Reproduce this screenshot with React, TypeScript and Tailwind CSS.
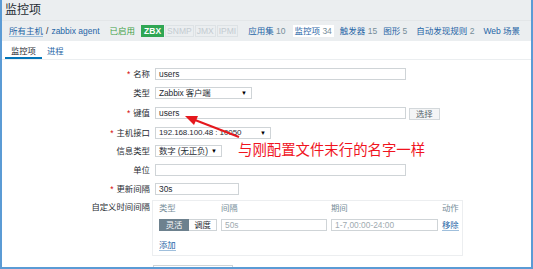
import { FC, ReactNode } from "react";

const font = { fontFamily: '"Liberation Sans", "Noto Sans CJK SC", sans-serif' };

const Req: FC = () => <span className="text-[#d40000] mr-[3px]">*</span>;

const Row: FC<{ label: ReactNode; children: ReactNode; top?: boolean }> = ({ label, children, top }) => (
  <div className={"flex " + (top ? "items-start" : "items-center")}>
    <div className={"w-[148px] shrink-0 text-right pr-0 " + (top ? "pt-[1px]" : "")}>{label}</div>
    <div className="ml-[5px] flex items-center">{children}</div>
  </div>
);

const Input: FC<{ value?: string; w: string; muted?: boolean }> = ({ value, w, muted }) => (
  <div
    className={
      "h-[12px] border border-[#cfd4d7] bg-white px-[3px] leading-[10px] " +
      w +
      (muted ? " text-[#a0aab0]" : " text-[#1f2c33]")
    }
  >
    {value}
  </div>
);

const Select: FC<{ value: string; w: string }> = ({ value, w }) => (
  <div className={"h-[12px] border border-[#cfd4d7] bg-white pl-[3px] pr-[4px] flex items-center justify-between leading-[10px] " + w}>
    <span className="tracking-[-0.1px]">{value}</span>
    <span className="text-[6px] text-black">▼</span>
  </div>
);

const App: FC = () => {
  return (
    <div
      className="relative w-[533px] h-[269px] overflow-hidden bg-white border-l-2 border-r-2 border-b-2 border-[#5b9bd5] text-[8.4px] text-[#1f2c33]"
      style={font}
    >
      {/* header */}
      <div className="bg-[#ebeef0]">
        <div className="h-[20px] pl-[3px] pt-[3px] text-[12px] leading-[14px] text-[#1f2c33]">监控项</div>
        <div className="h-[21px] border-t border-[#e3e6e8] flex items-center pl-[7px] text-[8.5px] leading-[10px]">
          <span className="text-[#1f65a6] border-b border-[#9fbfdc]">所有主机</span>
          <span className="mx-[3px] text-[#1f2c33]">/</span>
          <span className="text-[#1f65a6]">zabbix agent</span>
          <span className="ml-[10px] text-[#429e47]">已启用</span>
          <span className="ml-[6px] flex">
            <span className="px-[2px] bg-[#2fa653] text-white font-bold border border-[#2fa653]">ZBX</span>
            <span className="ml-[1px] px-[1px] text-[#c3cbd0] border border-[#dde2e5]">SNMP</span>
            <span className="ml-[1px] px-[1px] text-[#c3cbd0] border border-[#dde2e5]">JMX</span>
            <span className="ml-[1px] px-[1px] text-[#c3cbd0] border border-[#dde2e5]">IPMI</span>
          </span>
          <span className="ml-[10px] text-[#1f65a6]">应用集<span className="text-[#768d99]"> 10</span></span>
          <span className="ml-[7px] px-[2px] py-[1px] bg-white text-[#1f65a6]">监控项<span className="text-[#768d99]"> 34</span></span>
          <span className="ml-[6px] text-[#1f65a6]">触发器<span className="text-[#768d99]"> 15</span></span>
          <span className="ml-[6px] text-[#1f65a6]">图形<span className="text-[#768d99]"> 5</span></span>
          <span className="ml-[9px] text-[#1f65a6]">自动发现规则<span className="text-[#768d99]"> 2</span></span>
          <span className="ml-[9px] text-[#1f65a6]">Web 场景</span>
        </div>
      </div>

      {/* tabs */}
      <div className="h-[19px] flex pl-[3px] border-b border-[#ebeef0] text-[8.3px]">
        <div className="px-[6px] pt-[4px] border-b-2 border-[#0275b8] text-[#1f2c33]">监控项</div>
        <div className="px-[5px] pt-[4px] text-[#1f65a6]">进程</div>
      </div>

      {/* form */}
      <div className="pt-[8px] flex flex-col gap-y-[6.6px] leading-[12px]">
        <Row label={<><Req />名称</>}>
          <Input value="users" w="w-[251px]" />
        </Row>
        <Row label="类型">
          <Select value="Zabbix 客户端" w="w-[97px]" />
        </Row>
        <Row label={<><Req />键值</>}>
          <Input value="users" w="w-[251px]" />
          <div className="ml-[3px] mt-[3px] h-[12px] px-[6px] leading-[10px] border border-[#d3d8db] bg-[#f4f5f6] text-[#55646c]">选择</div>
        </Row>
        <Row label={<><Req />主机接口</>}>
          <Select value="192.168.100.48 : 10050" w="w-[116px] text-[8px]" />
        </Row>
        <Row label="信息类型">
          <Select value="数字 (无正负)" w="w-[67px]" />
        </Row>
        <Row label="单位">
          <Input w="w-[251px]" />
        </Row>
        <Row label={<><Req />更新间隔</>}>
          <Input value="30s" w="w-[84px]" />
        </Row>
        <div className="flex items-start mt-[-1px]">
          <div className="w-[148px] shrink-0 text-right pt-[1px]">自定义时间间隔</div>
          <div className="ml-[2px] w-[311px] h-[56px] border border-[#eceef0] pl-[6px] pt-[2px]">
            <div className="flex text-[#768d99] leading-[10px]">
              <div className="w-[62px]">类型</div>
              <div className="w-[110px]">间隔</div>
              <div className="w-[111px]">期间</div>
              <div>动作</div>
            </div>
            <div className="flex items-center mt-[6px]">
              <div className="w-[62px] flex">
                <div className="h-[12px] w-[30px] text-center leading-[10px] bg-[#6d818e] border border-[#6d818e] text-white">灵活</div>
                <div className="h-[12px] w-[28px] text-center leading-[10px] bg-white border border-[#cfd4d7] border-l-0 text-[#1f2c33]">调度</div>
              </div>
              <div className="w-[110px]">
                <Input value="50s" w="w-[106px]" muted />
              </div>
              <div className="w-[111px]">
                <Input value="1-7,00:00-24:00" w="w-[107px]" muted />
              </div>
              <span className="text-[#1f65a6] border-b border-[#9fbfdc] leading-[10px]">移除</span>
            </div>
            <div className="mt-[9px] leading-[10px]">
              <span className="text-[#1f65a6] border-b border-[#9fbfdc]">添加</span>
            </div>
          </div>
        </div>
        <div className="flex items-start mt-[2px]">
          <div className="w-[144px] shrink-0 text-right pt-[1px]"><Req />历史数据保留时长</div>
          <div className="ml-[7px]">
            <Input value="90d" w="w-[80px]" />
          </div>
        </div>
      </div>

      {/* annotation overlay */}
      <svg className="absolute left-0 top-0 pointer-events-none" width="533" height="269">
        <line x1="237" y1="137" x2="193" y2="120" stroke="#e5181d" strokeWidth="2" />
        <polygon points="183,116 196,116 192,125" fill="#e5181d" />
      </svg>
      <div
        className="absolute left-[236px] top-[141px] text-[14.4px] leading-[16px] text-[#f0141e] whitespace-nowrap"
        style={{ fontFamily: '"Noto Sans CJK SC", sans-serif' }}
      >
        与刚配置文件末行的名字一样
      </div>
    </div>
  );
};

export default App;
